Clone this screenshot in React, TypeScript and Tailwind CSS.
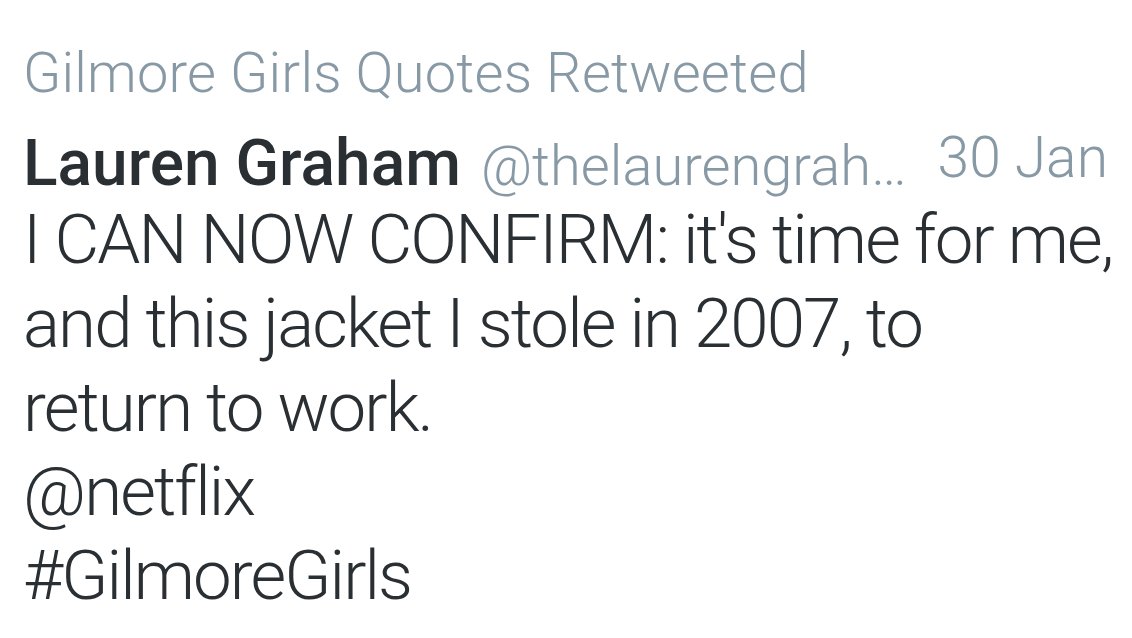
export default function App() {
  return (
    <div className="w-[1132px] h-[638px] overflow-hidden bg-white font-['Roboto',sans-serif]">
      <div className="pl-[23px] pr-[24px] pt-[45px]">
        {/* retweet context */}
        <div className="text-[56px] leading-[56px] font-light text-[#8899a6] whitespace-nowrap tracking-[0.2px]">
          Gilmore Girls Quotes Retweeted
        </div>

        {/* author row */}
        <div className="mt-[29px] flex items-baseline h-[68px] leading-[68px] whitespace-nowrap">
          <span className="text-[64px] font-medium text-[#292f33] shrink-0">Lauren Graham</span>
          <span className="ml-[20px] text-[56px] font-light text-[#8899a6] min-w-0 truncate">
            @thelaurengrah…
          </span>
          <span className="relative -top-[8px] ml-auto pl-[30px] text-[57px] font-light text-[#8899a6] shrink-0">
            30 Jan
          </span>
        </div>

        {/* tweet body */}
        <div className="text-[69px] leading-[84px] font-light text-[#292f33] whitespace-nowrap tracking-[-1.9px]">
          <div>
            I CAN NOW CONFIRM: it's time for me,
            <br />
            and this jacket I stole in 2007, to
            <br />
            return to work.
          </div>
          <div>@netflix</div>
          <div>#GilmoreGirls</div>
        </div>
      </div>
    </div>
  );
}
